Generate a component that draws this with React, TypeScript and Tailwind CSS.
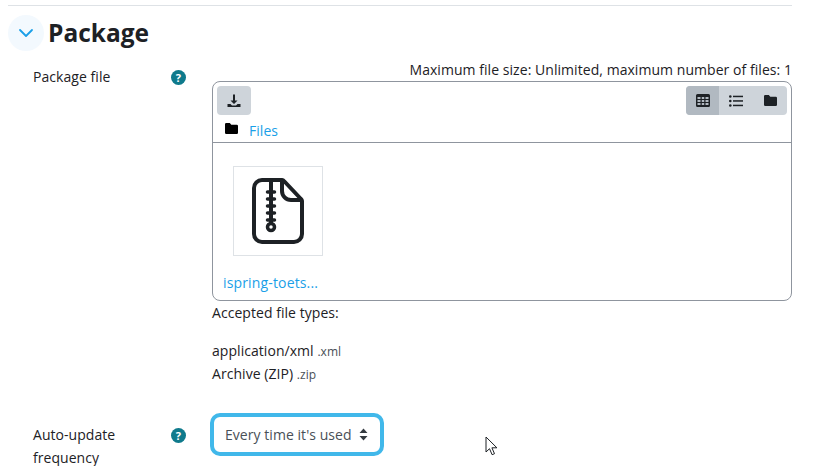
import { ChevronDown } from 'lucide-react';

const FONT = "font-['Open_Sans',sans-serif]";

function HelpIcon() {
  return (
    <span className="flex h-[15px] w-[15px] items-center justify-center rounded-full bg-[#0f7a8c] text-[11px] font-bold leading-none text-white">
      ?
    </span>
  );
}

function Label({ children }: { children: React.ReactNode }) {
  return (
    <div className="flex w-[186px] shrink-0 pl-[33px]">
      <div className="w-[138px] shrink-0 pr-[40px] text-[14px] leading-[23px] text-[#1d2125]">{children}</div>
      <div className="pt-[5px]">
        <HelpIcon />
      </div>
    </div>
  );
}

function DownloadIcon() {
  return (
    <svg width="16" height="16" viewBox="0 0 16 16" fill="#1d2125">
      <path d="M7 1.500h2v6h2.500L8 11 4.500 7.500H7z" />
      <path d="M1.500 11h3L6 12.500h4L11.500 11h3v3h-13z" />
    </svg>
  );
}

function GridIcon() {
  return (
    <svg width="14" height="13" viewBox="0 0 14 13" fill="#1d2125">
      <path d="M1.500 0h11A1.500 1.500 0 0 1 14 1.500v10a1.500 1.500 0 0 1-1.500 1.500h-11A1.500 1.500 0 0 1 0 11.500v-10A1.500 1.500 0 0 1 1.500 0zM1.500 3v2h3V3zm4.250 0v2h2.500V3zm3.750 0v2h3V3zM1.500 6v2h3V6zm4.250 0v2h2.500V6zm3.750 0v2h3V6zM1.500 9v2h3V9zm4.250 0v2h2.500V9zm3.750 0v2h3V9z" />
    </svg>
  );
}

function ListIcon() {
  return (
    <svg width="14" height="12" viewBox="0 0 14 12" fill="#1d2125">
      <circle cx="1.300" cy="1.500" r="1.300" />
      <circle cx="1.300" cy="6" r="1.300" />
      <circle cx="1.300" cy="10.500" r="1.300" />
      <rect x="4" y="0.700" width="10" height="1.500" />
      <rect x="4" y="5.200" width="10" height="1.500" />
      <rect x="4" y="9.700" width="10" height="1.500" />
    </svg>
  );
}

function FolderIcon({ color = '#1d2125' }: { color?: string }) {
  return (
    <svg width="13" height="11" viewBox="0 0 13 11" fill={color}>
      <path d="M1.200 0h3.600l1.500 1.700h5.500A1.200 1.200 0 0 1 13 2.900v6.900A1.200 1.200 0 0 1 11.800 11H1.200A1.200 1.200 0 0 1 0 9.800V1.200A1.200 1.200 0 0 1 1.200 0z" />
    </svg>
  );
}

function ZipIcon() {
  return (
    <svg width="52" height="66" viewBox="0 0 52 66" fill="none" stroke="#1d2125" strokeWidth="4" strokeLinejoin="round" strokeLinecap="round">
      <path d="M10 2h20a3 3 0 0 1 2 1l17 18a3 3 0 0 1 1 2v33a8 8 0 0 1-8 8H10a8 8 0 0 1-8-8V10a8 8 0 0 1 8-8z" />
      <path d="M30 3v10a9 9 0 0 0 9 9h10" />
      <path d="M19 2v43" />
      <path d="M15.500 14h7M15.500 21h7M15.500 28h7M15.500 35h7M15.500 42h7" strokeWidth="3.500" />
      <circle cx="19" cy="49" r="3.500" strokeWidth="3.500" />
    </svg>
  );
}

function CursorIcon() {
  return (
    <svg width="14" height="20" viewBox="0 0 14 20" fill="#fff" stroke="#1d2125" strokeWidth="1">
      <path d="M1 1v15l3.500-3.300 2.600 6 2.400-1-2.600-5.900h5z" />
    </svg>
  );
}

export default function App() {
  return (
    <div className={`relative h-[466px] w-[814px] overflow-hidden bg-white pl-[8px] pr-[22px] pt-[5px] tracking-[0.05px] ${FONT}`}>
      <div className="border-t border-[#dee2e6] pt-[8px]">
        <div className="flex items-center gap-[4px]">
          <div className="flex h-[36px] w-[36px] items-center justify-center rounded-full bg-[#f3f9fe]">
            <ChevronDown size={24} strokeWidth={1.800} className="text-[#1a9fe8]" />
          </div>
          <h3 className="pt-[1px] text-[24.500px] font-bold leading-[36px] tracking-normal text-[#1d2125]">Package</h3>
        </div>
      </div>

      <div className="-ml-[8px] mt-[4px] flex">
        <div className="pt-[10px]"><Label>Package file</Label></div>
        <div className="ml-[26px] w-[580px]">
          <div className="mb-[1px] whitespace-nowrap pt-[4px] text-right text-[14px] leading-[21px] text-[#1d2125]">
            Maximum file size: Unlimited, maximum number of files: 1
          </div>
          <div className="h-[220px] rounded-[8px] border border-[#8f959e]">
            <div className="flex items-start justify-between px-[4px] pt-[4px]">
              <button className="flex h-[29px] w-[34px] items-center justify-center rounded-[4px] bg-[#ced4da]">
                <DownloadIcon />
              </button>
              <div className="flex h-[29px] overflow-hidden rounded-[4px] bg-[#ced4da]">
                <div className="flex w-[33px] items-center justify-center bg-[#b1b9c1]"><GridIcon /></div>
                <div className="flex w-[34px] items-center justify-center"><ListIcon /></div>
                <div className="flex w-[34px] items-center justify-center"><FolderIcon /></div>
              </div>
            </div>
            <div className="flex h-[28px] items-center border-b border-[#8f959e] pl-[12px]">
              <FolderIcon color="#000" />
              <a className="ml-[11px] mt-[3px] text-[14px] text-[#1a9fe8]">Files</a>
            </div>
            <div className="pl-[20px] pt-[23px]">
              <div className="flex h-[90px] w-[90px] items-center justify-center border border-[#dee2e6]">
                <ZipIcon />
              </div>
              <a className="-ml-[10px] mt-[16px] block text-[14px] leading-[21px] tracking-[0.15px] text-[#1a9fe8]">ispring-toets...</a>
            </div>
          </div>
          <div className="text-[14px] leading-[23px] text-[#1d2125]">
            <div>Accepted file types:</div>
            <div className="mt-[17px] leading-[20px]">application/xml <span className="text-[12px] text-[#495057]">.xml</span></div>
            <div className="leading-[23px]">Archive (ZIP) <span className="text-[12px] text-[#495057]">.zip</span></div>
          </div>
        </div>
      </div>

      <div className="-ml-[8px] mt-[27px] flex">
        <div className="pt-[10px]"><Label>Auto-update frequency</Label></div>
        <div className="ml-[24px] flex h-[43px] w-[174px] items-center justify-between rounded-[10px] border-[4px] border-[#41b8ea] bg-white pl-[11px] pr-[12px] text-[14px] text-[#495057]">
          <span className="whitespace-nowrap">Every time it's used</span>
          <svg width="9" height="13" viewBox="0 0 9 13" fill="#343a40">
            <path d="M4.500 0.500L8.500 5H0.500zM4.500 12.500L0.500 8H8.500z" />
          </svg>
        </div>
      </div>

      <div className="absolute left-[485px] top-[436px]">
        <CursorIcon />
      </div>
    </div>
  );
}
